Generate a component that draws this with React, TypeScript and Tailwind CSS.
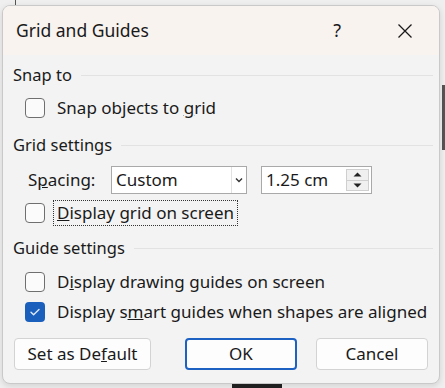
import React from 'react';

const font = { fontFamily: '"Noto Sans", "Open Sans", sans-serif' };

function Check({ checked = false }: { checked?: boolean }) {
  if (checked) {
    return (
      <div className="w-[20px] h-[20px] rounded-[4px] bg-[#1b5fbd] flex items-center justify-center shrink-0">
        <svg width="12" height="10" viewBox="0 0 12 10" fill="none">
          <path d="M2 5.2l2.6 2.6L10 2.4" stroke="#dfe8f7" strokeWidth="1.4" strokeLinecap="round" strokeLinejoin="round" />
        </svg>
      </div>
    );
  }
  return <div className="w-[20px] h-[20px] rounded-[4px] border border-[#6f6f6f] bg-[#fbfbfb] shrink-0" />;
}

function Section({ title }: { title: string }) {
  return (
    <div className="h-[24px] flex items-center gap-[9px]">
      <span className="text-[16.5px] text-[#1a1a1a]">{title}</span>
      <div className="flex-1 h-px bg-[#e2e2e2] mr-[6px]" />
    </div>
  );
}

function CheckRow({ label, checked }: { label: React.ReactNode; checked?: boolean }) {
  return (
    <div className="h-[30px] flex items-center pl-[12px] gap-[12px]">
      <Check checked={checked} />
      <span className="text-[17px] text-[#1a1a1a]">{label}</span>
    </div>
  );
}

export default function App() {
  return (
    <div className="w-[445px] h-[388px] bg-[#efefef] overflow-hidden relative" style={font}>
      <div className="absolute left-[15px] top-0 w-px h-[6px] bg-[#555]" />
      <div className="absolute right-0 top-[85px] w-[3px] h-[65px] bg-[#555]" />
      <div className="absolute left-[232px] bottom-0 w-[50px] h-[4px] bg-[#222]" />

      <div className="ml-[2px] mt-[5px] w-[438px] h-[379px] rounded-[8px] border border-[#c9c9c9] overflow-hidden bg-[#f3f3f3] relative shadow-[0_2px_6px_rgba(0,0,0,0.12)]">
        {/* title bar */}
        <div className="h-[49px] bg-[#f9f3f0] flex items-center pl-[13px] pr-[26px]">
          <span className="text-[17.5px] text-[#1a1a1a] flex-1">Grid and Guides</span>
          <span className="text-[18px] text-[#1a1a1a] mr-[56px]">?</span>
          <svg width="16" height="16" viewBox="0 0 16 16" fill="none">
            <path d="M1.5 1.5l13 13M14.5 1.5l-13 13" stroke="#1a1a1a" strokeWidth="1.3" />
          </svg>
        </div>

        <div className="pl-[10px] pt-[8px]">
          <Section title="Snap to" />
          <div className="mt-[6px]">
            <CheckRow label={<>Snap objects to <u>g</u>rid</>} />
          </div>

          <div className="mt-[10px]">
            <Section title="Grid settings" />
          </div>

          <div className="mt-[9px] h-[28px] flex items-center pl-[15px]">
            <span className="text-[17px] text-[#1a1a1a] w-[83px]">
              S<u>p</u>acing:
            </span>
            <div className="w-[136px] h-[28px] border border-[#a9a9a9] bg-white flex items-center">
              <span className="text-[17px] text-[#1a1a1a] pl-[4px] flex-1">Custom</span>
              <div className="w-[14px] h-full border-l border-[#e2e2e2] flex items-center justify-center mr-[1px]">
                <svg width="8" height="6" viewBox="0 0 8 6" fill="none">
                  <path d="M1 1.5l3 3 3-3" stroke="#333" strokeWidth="1.4" />
                </svg>
              </div>
            </div>
            <div className="ml-[14px] w-[111px] h-[28px] border border-[#a9a9a9] bg-white flex items-center">
              <span className="text-[17px] text-[#1a1a1a] pl-[4px] flex-1">1.25 cm</span>
              <div className="w-[23px] h-[22px] mr-[2px] border border-[#cfcfcf] bg-[#f0f0f0] flex flex-col">
                <div className="flex-1 flex items-center justify-center border-b border-[#cfcfcf]">
                  <svg width="9" height="5" viewBox="0 0 9 5"><path d="M4.5 0.5L8.5 4.5H0.5z" fill="#222" /></svg>
                </div>
                <div className="flex-1 flex items-center justify-center">
                  <svg width="9" height="5" viewBox="0 0 9 5"><path d="M0.5 0.5H8.5L4.5 4.5z" fill="#222" /></svg>
                </div>
              </div>
            </div>
          </div>

          <div className="mt-[6px] h-[26px] flex items-center pl-[12px] gap-[8px]">
            <Check />
            <span className="text-[17px] text-[#1a1a1a] h-[26px] px-[3px] flex items-center border border-dotted border-[#333]">
              <u>D</u>isplay grid on screen
            </span>
          </div>

          <div className="mt-[10px]">
            <Section title="Guide settings" />
          </div>

          <div className="mt-[7px]">
            <CheckRow label={<>D<u>i</u>splay drawing guides on screen</>} />
            <CheckRow checked label={<>Display s<u>m</u>art guides when shapes are aligned</>} />
          </div>
        </div>

        <div className="mt-[11px] px-[11px] flex items-center">
          <button className="w-[137px] h-[32px] bg-[#fdfdfd] border border-[#d3d3d3] rounded-[4px] text-[17px] text-[#1a1a1a]">
            Set as De<u>f</u>ault
          </button>
          <button className="ml-[34px] w-[112px] h-[32px] bg-[#fdfdfd] border-2 border-[#1d62c2] rounded-[4px] text-[17px] text-[#1a1a1a]">
            OK
          </button>
          <button className="ml-[19px] w-[112px] h-[32px] bg-[#fdfdfd] border border-[#d3d3d3] rounded-[4px] text-[17px] text-[#1a1a1a]">
            Cancel
          </button>
        </div>
      </div>
    </div>
  );
}
